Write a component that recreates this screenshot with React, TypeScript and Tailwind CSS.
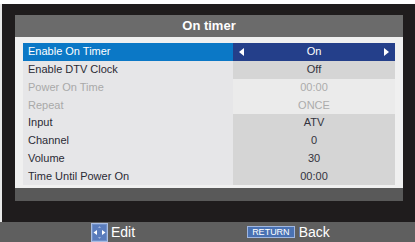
import React from "react";

type Row = { label: string; value: string; disabled?: boolean; selected?: boolean };

const rows: Row[] = [
  { label: "Enable On Timer", value: "On", selected: true },
  { label: "Enable DTV Clock", value: "Off" },
  { label: "Power On Time", value: "00:00", disabled: true },
  { label: "Repeat", value: "ONCE", disabled: true },
  { label: "Input", value: "ATV" },
  { label: "Channel", value: "0" },
  { label: "Volume", value: "30" },
  { label: "Time Until Power On", value: "00:00" },
];

function EditIcon() {
  return (
    <svg width="17" height="19" viewBox="0 0 17 19">
      <rect x="0.5" y="0.5" width="16" height="18" fill="#6f8fc8" stroke="#a9bde3" />
      <rect x="2" y="2" width="13" height="15" fill="#5a7cbc" />
      <polygon points="2.5,9.5 6,7 6,12" fill="#ffffff" />
      <polygon points="14.5,9.5 11,7 11,12" fill="#ffffff" />
      <polygon points="8.5,3 7,5 10,5" fill="#9fb3dc" />
      <polygon points="8.5,16 7,14 10,14" fill="#9fb3dc" />
    </svg>
  );
}

export default function App() {
  return (
    <div
      className="w-[415px] h-[242px] overflow-hidden bg-white flex flex-col"
      style={{ fontFamily: '"Liberation Sans", Arial, sans-serif' }}
    >
      <div className="h-[4px] bg-white" />
      <div className="flex-1 flex">
        <div className="w-[2px] bg-[#e8e8e8]" />
        <div className="flex-1 bg-[#1f1c1d] flex flex-col">
          <div className="ml-[13px] mt-[11px] w-[388px] flex flex-col">
            <div className="h-[22px] bg-[#6b6b6b] flex items-center justify-center text-white font-bold text-[13px]">
              On timer
            </div>
            <div className="bg-[#f0f0f0] pt-[6px] pb-[3px] px-[8px] flex flex-col">
              {rows.map((r) => (
                <div key={r.label} className="h-[17.75px] flex text-[11px] leading-none">
                  <div
                    className={
                      "w-[210px] flex items-center pl-[5px] " +
                      (r.selected
                        ? "bg-[#0b78c6] text-white"
                        : r.disabled
                        ? "bg-[#e6e6e8] text-[#a9a9a9]"
                        : "bg-[#e6e6e8] text-[#2b2b35]")
                    }
                  >
                    {r.label}
                  </div>
                  <div
                    className={
                      "flex-1 flex items-center justify-center relative " +
                      (r.selected
                        ? "bg-[#243f8a] text-white"
                        : r.disabled
                        ? "bg-[#ebebeb] text-[#acacac]"
                        : "bg-[#d5d5d5] text-[#33333d]")
                    }
                  >
                    {r.selected && (
                      <svg className="absolute left-[6px] top-[5px]" width="5" height="8" viewBox="0 0 5 8">
                        <polygon points="0,4 5,0 5,8" fill="#ffffff" />
                      </svg>
                    )}
                    {r.value}
                    {r.selected && (
                      <svg className="absolute right-[6px] top-[5px]" width="5" height="8" viewBox="0 0 5 8">
                        <polygon points="5,4 0,0 0,8" fill="#ffffff" />
                      </svg>
                    )}
                  </div>
                </div>
              ))}
            </div>
            <div className="h-[13px] bg-[#595959]" />
          </div>
        </div>
      </div>
      <div className="h-[20px] bg-[#5f5f5f] flex items-center text-white text-[14px] leading-none">
        <div className="ml-[91px] flex items-center">
          <EditIcon />
          <span className="ml-[3px]">Edit</span>
        </div>
        <div className="ml-[112px] flex items-center">
          <div className="h-[12px] px-[4px] border border-[#9fb6e0] bg-[#4a72b3] flex items-center text-[9px] text-white">
            RETURN
          </div>
          <span className="ml-[4px]">Back</span>
        </div>
      </div>
    </div>
  );
}
